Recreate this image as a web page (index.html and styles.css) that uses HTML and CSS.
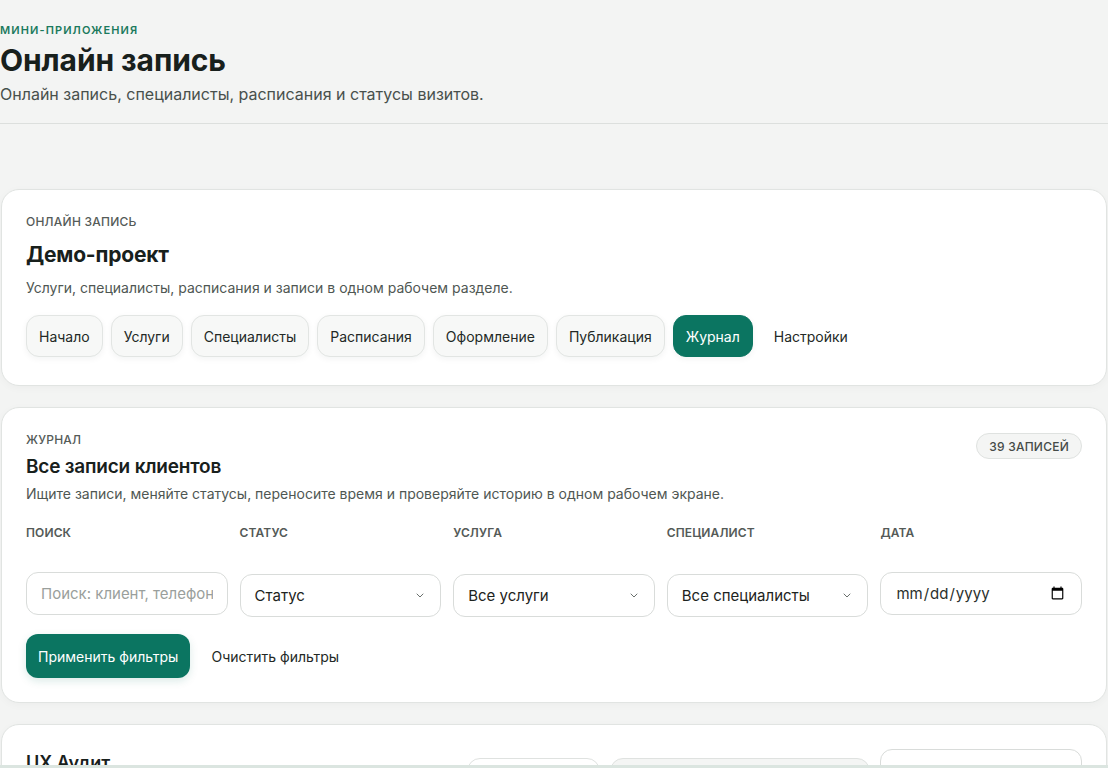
FILE: index.html
```html
<!DOCTYPE html>
<html lang="ru">
<head>
<meta charset="utf-8">
<title>Онлайн запись</title>
<link rel="stylesheet" href="styles.css">
</head>
<body>
<header class="page-head">
  <div class="eyebrow">Мини-приложения</div>
  <h1 class="page-title">Онлайн запись</h1>
  <p class="page-sub">Онлайн запись, специалисты, расписания и статусы визитов.</p>
</header>

<main class="main">
  <section class="card card-project">
    <div class="kicker">Онлайн запись</div>
    <h2 class="project-title">Демо-проект</h2>
    <p class="card-desc">Услуги, специалисты, расписания и записи в одном рабочем разделе.</p>
    <nav class="tabs">
      <a class="tab">Начало</a>
      <a class="tab">Услуги</a>
      <a class="tab">Специалисты</a>
      <a class="tab">Расписания</a>
      <a class="tab">Оформление</a>
      <a class="tab">Публикация</a>
      <a class="tab tab-active">Журнал</a>
      <a class="tab tab-plain">Настройки</a>
    </nav>
  </section>

  <section class="card card-journal">
    <div class="journal-head">
      <div>
        <div class="kicker">Журнал</div>
        <h2 class="section-title">Все записи клиентов</h2>
      </div>
      <span class="count-badge">39 записей</span>
    </div>
    <p class="card-desc">Ищите записи, меняйте статусы, переносите время и проверяйте историю в одном рабочем экране.</p>

    <div class="filters">
      <label class="field">
        <span class="field-label">Поиск</span>
        <input class="control input" type="text" placeholder="Поиск: клиент, телефон">
      </label>
      <div class="field">
        <span class="field-label">Статус</span>
        <div class="control select"><span>Статус</span>
          <svg class="chev" viewBox="0 0 8 5" width="8" height="5"><path d="M1 1l3 3 3-3" fill="none" stroke="#6a706d" stroke-width="1" stroke-linecap="round" stroke-linejoin="round"/></svg>
        </div>
      </div>
      <div class="field">
        <span class="field-label">Услуга</span>
        <div class="control select"><span>Все услуги</span>
          <svg class="chev" viewBox="0 0 8 5" width="8" height="5"><path d="M1 1l3 3 3-3" fill="none" stroke="#6a706d" stroke-width="1" stroke-linecap="round" stroke-linejoin="round"/></svg>
        </div>
      </div>
      <div class="field">
        <span class="field-label">Специалист</span>
        <div class="control select"><span>Все специалисты</span>
          <svg class="chev" viewBox="0 0 8 5" width="8" height="5"><path d="M1 1l3 3 3-3" fill="none" stroke="#6a706d" stroke-width="1" stroke-linecap="round" stroke-linejoin="round"/></svg>
        </div>
      </div>
      <label class="field">
        <span class="field-label">Дата</span>
        <input class="control input date" type="date">
      </label>
    </div>

    <div class="actions">
      <button class="btn-primary">Применить фильтры</button>
      <button class="btn-link">Очистить фильтры</button>
    </div>
  </section>

  <section class="card card-visit">
    <h3 class="visit-title">UX Аудит</h3>
    <div class="visit-right">
      <span class="pill pill-green">Подтверждена</span>
      <span class="pill">Автоматическое подтверждение</span>
      <div class="control visit-select"><span>Статус</span></div>
    </div>
  </section>
</main>
<div class="bottom-strip"></div>
</body>
</html>
```

FILE: styles.css
```css
* { box-sizing: border-box; }

html, body {
  margin: 0;
  padding: 0;
}

body {
  background: #f3f4f3;
  font-family: Inter, "Noto Sans", "Liberation Sans", sans-serif;
  color: #1d2320;
  overflow: hidden;
}

.page-head {
  padding: 23px 0 18px;
  border-bottom: 1px solid #dcdfdd;
}

.eyebrow {
  font-size: 11px;
  font-weight: 600;
  letter-spacing: 0.1em;
  text-transform: uppercase;
  color: #1b7a5d;
  line-height: 14px;
}

.page-title {
  margin: 4px 0 0;
  font-size: 30px;
  font-weight: 700;
  letter-spacing: -0.1px;
  line-height: 38px;
  color: #18201c;
}

.page-sub {
  margin: 4px 0 0;
  font-size: 16px;
  line-height: 22px;
  color: #48504c;
}

.main {
  padding: 65px 1px 0;
  display: flex;
  flex-direction: column;
  gap: 21px;
}

.card {
  background: #fff;
  border: 1px solid #e1e4e2;
  border-radius: 18px;
  padding: 24px;
  box-shadow: 0 2px 8px rgba(20, 40, 30, 0.03);
}

.card-project { padding-top: 25px; padding-bottom: 28px; }
.card-journal { padding-top: 25px; }

.kicker {
  font-size: 12px;
  font-weight: 500;
  text-transform: uppercase;
  color: #555b58;
  line-height: 14px;
  letter-spacing: 0.02em;
}

.project-title {
  margin: 12px 0 0;
  font-size: 21px;
  font-weight: 700;
  line-height: 28px;
  letter-spacing: -0.2px;
  color: #18201c;
}

.card-desc {
  margin: 9px 0 0;
  font-size: 14px;
  line-height: 20px;
  color: #4f5753;
}

.tabs {
  display: flex;
  gap: 8px;
  margin-top: 17px;
}

.tab {
  display: inline-flex;
  align-items: center;
  height: 42px;
  padding: 0 12px;
  font-size: 14px;
  color: #232926;
  background: #f7f8f7;
  border: 1px solid #e2e5e3;
  border-radius: 13px;
  box-shadow: 0 2px 6px rgba(20, 40, 30, 0.05);
}

.tab-active {
  background: #0b7561;
  border-color: #0b7561;
  color: #fff;
}

.tab-plain {
  background: transparent;
  border-color: transparent;
  box-shadow: none;
}

.journal-head {
  display: flex;
  justify-content: space-between;
  align-items: flex-start;
}

.section-title {
  margin: 8px 0 0;
  font-size: 19px;
  font-weight: 600;
  line-height: 24px;
  letter-spacing: -0.2px;
  color: #18201c;
}

.card-journal .card-desc { margin-top: 5px; }

.count-badge {
  display: inline-flex;
  align-items: center;
  height: 26px;
  padding: 0 12px;
  border: 1px solid #dfe2e0;
  border-radius: 999px;
  background: #f4f5f4;
  font-size: 12px;
  font-weight: 500;
  text-transform: uppercase;
  color: #454b48;
  letter-spacing: 0.02em;
}

.filters {
  display: grid;
  grid-template-columns: repeat(5, 1fr);
  gap: 12px;
  margin-top: 22px;
}

.field {
  display: flex;
  flex-direction: column;
}

.field-label {
  font-size: 12px;
  font-weight: 600;
  text-transform: uppercase;
  color: #545a57;
  line-height: 14px;
  height: 46px;
  letter-spacing: 0.01em;
}

.control {
  height: 43px;
  border: 1px solid #d9dcda;
  border-radius: 12px;
  background: #fff;
  font-family: inherit;
  font-size: 15px;
  color: #1d2320;
  padding: 0 14px;
  width: 100%;
}

.input { outline: none; }
.input::placeholder { color: #9a9f9c; }

.select {
  display: flex;
  align-items: center;
  justify-content: space-between;
  margin-top: 2px;
}

.chev { flex: none; margin-right: 2px; }

.date { color: #2a302d; }

.actions {
  display: flex;
  align-items: center;
  gap: 8px;
  margin-top: 17px;
}

.btn-primary {
  height: 44px;
  padding: 0 12px;
  border: none;
  border-radius: 12px;
  background: #0b7561;
  color: #fff;
  font-family: inherit;
  font-size: 14px;
  box-shadow: 0 3px 8px rgba(11, 117, 97, 0.15);
}

.btn-link {
  height: 44px;
  padding: 0 13px;
  border: none;
  background: transparent;
  color: #232926;
  font-family: inherit;
  font-size: 14px;
}

.card-visit {
  display: flex;
  justify-content: space-between;
  align-items: flex-start;
  height: 120px;
}

.visit-title {
  margin: 3px 0 0;
  font-size: 18px;
  font-weight: 600;
  color: #18201c;
}

.visit-right {
  display: flex;
  gap: 10px;
  align-items: flex-start;
}

.pill {
  display: inline-flex;
  align-items: center;
  height: 26px;
  margin-top: 9px;
  padding: 0 12px;
  border: 1px solid #dfe2e0;
  border-radius: 999px;
  background: #f4f5f4;
  font-size: 12px;
  font-weight: 600;
  text-transform: uppercase;
  color: #454b48;
}

.pill-green { background: #fff; color: #0b7561; }

.visit-select {
  width: 202px;
  height: 44px;
  display: flex;
  align-items: center;
}

.bottom-strip {
  position: fixed;
  left: 0;
  right: 0;
  bottom: 0;
  height: 3px;
  background: #dbe5e0;
}
```
